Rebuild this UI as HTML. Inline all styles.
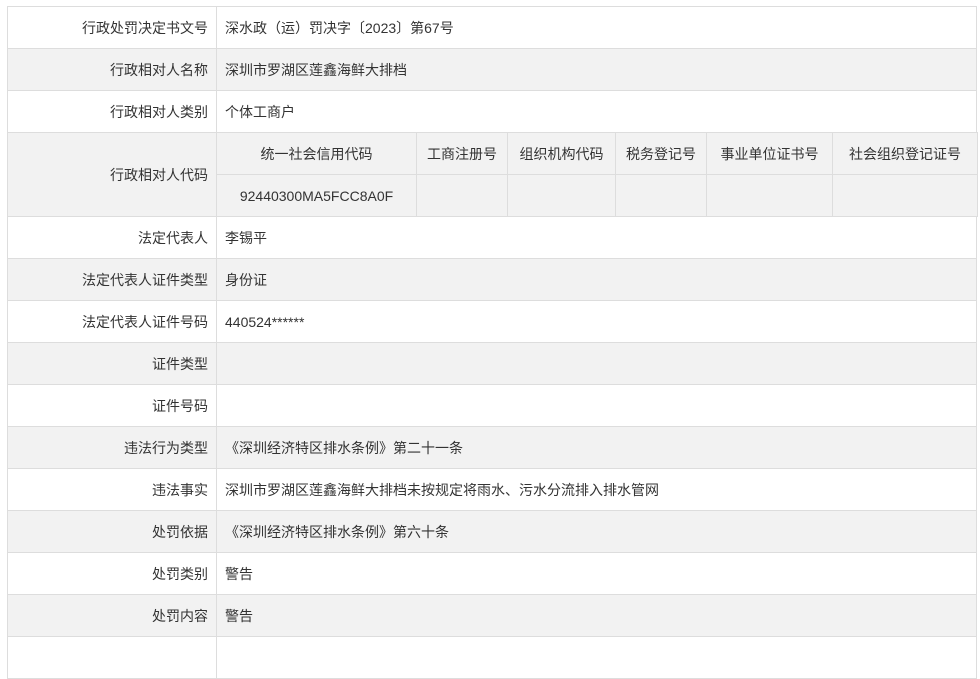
<!DOCTYPE html>
<html><head><meta charset="utf-8"><style>
body{margin:0;background:#fff;width:980px;height:643px;overflow:hidden;font-family:"Liberation Sans","Noto Sans CJK SC",sans-serif;font-size:14px;color:#333}
.c{position:absolute;box-sizing:border-box;border:1px solid #ddd;display:flex;align-items:center;white-space:nowrap}
.l{justify-content:flex-end;padding-right:8px}
.v{padding-left:8px}
.m{justify-content:center}
.g{background:#f2f2f2}
</style></head><body>
<div id="t"></div>
<script>
var rows=[["行政处罚决定书文号","深水政（运）罚决字〔2023〕第67号",0],["行政相对人名称","深圳市罗湖区莲鑫海鲜大排档",1],["行政相对人类别","个体工商户",0],null,["法定代表人","李锡平",0],["法定代表人证件类型","身份证",1],["法定代表人证件号码","440524******",0],["证件类型","",1],["证件号码","",0],["违法行为类型","《深圳经济特区排水条例》第二十一条",1],["违法事实","深圳市罗湖区莲鑫海鲜大排档未按规定将雨水、污水分流排入排水管网",0],["处罚依据","《深圳经济特区排水条例》第六十条",1],["处罚类别","警告",0],["处罚内容","警告",1],["","",0]];
var h="",y=6;
for(var i=0;i<rows.length;i++){var r=rows[i];
if(!r){h+='<div class="c l g" style="left:7px;top:'+y+'px;width:210px;height:85px">行政相对人代码</div>';
var xs=[216,416,507,615,706,832,977],hd=["统一社会信用代码","工商注册号","组织机构代码","税务登记号","事业单位证书号","社会组织登记证号"];
for(var j=0;j<6;j++){h+='<div class="c m g" style="left:'+xs[j]+'px;top:'+y+'px;width:'+(xs[j+1]-xs[j]+1)+'px;height:43px">'+hd[j]+'</div>';
h+='<div class="c m g" style="left:'+xs[j]+'px;top:'+(y+42)+'px;width:'+(xs[j+1]-xs[j]+1)+'px;height:43px">'+(j==0?"92440300MA5FCC8A0F":"")+'</div>';}
y+=84;continue;}
var g=r[2]?" g":"";
h+='<div class="c l'+g+'" style="left:7px;top:'+y+'px;width:210px;height:43px">'+r[0]+'</div>';
h+='<div class="c v'+g+'" style="left:216px;top:'+y+'px;width:761px;height:43px">'+r[1]+'</div>';
y+=42;}
document.getElementById("t").innerHTML=h;
</script>
</body></html>
